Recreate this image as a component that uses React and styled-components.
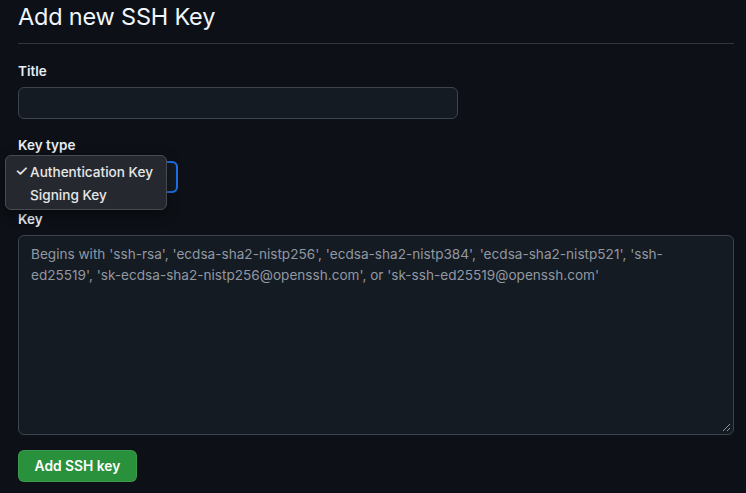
import React from "react";
import styled, { createGlobalStyle } from "styled-components";

const Global = createGlobalStyle`
  html, body { margin: 0; padding: 0; background: #0d1117; }
  body { font-family: Inter, "Noto Sans", sans-serif; color: #e6edf3; }
  * { box-sizing: border-box; }
`;

const Page = styled.div`
  width: 746px;
  height: 493px;
  background: #0d1117;
  padding: 0 12px 0 18px;
  overflow: hidden;
`;

const Header = styled.div`
  border-bottom: 1px solid #30363d;
  height: 44px;
  display: flex;
  align-items: flex-start;
`;

const Heading = styled.h2`
  margin: 0;
  padding-top: 2px;
  font-size: 23.5px;
  font-weight: 400;
  letter-spacing: -0.2px;
  line-height: 30px;
  color: #f0f6fc;
`;

const Form = styled.div`
  display: flex;
  flex-direction: column;
  padding-top: 17px;
`;

const Field = styled.div`
  display: flex;
  flex-direction: column;
  margin-bottom: ${(p) => p.$mb || 16}px;
`;

const Label = styled.label`
  font-size: 13.5px;
  font-weight: 600;
  line-height: 20px;
  margin-bottom: 6px;
  color: #e6edf3;
`;

const Input = styled.div`
  width: 440px;
  height: 32px;
  background: #151b23;
  border: 1px solid #3d444d;
  border-radius: 6px;
`;

const SelectWrap = styled.div`
  position: relative;
  height: 32px;
`;

const Select = styled.div`
  width: 160px;
  height: 32px;
  background: #151b23;
  border: 2px solid #1f6feb;
  border-radius: 6px;
`;

const Menu = styled.div`
  position: absolute;
  left: -13px;
  top: -6px;
  width: 162px;
  padding: 4px 0 3px;
  background: #25292f;
  border: 1px solid #474c53;
  border-radius: 6px;
  box-shadow: 0 4px 12px rgba(0, 0, 0, 0.5);
  display: flex;
  flex-direction: column;
`;

const MenuItem = styled.div`
  display: flex;
  align-items: center;
  height: 23px;
  font-size: 13.6px;
  font-weight: 500;
  color: #e6e7e8;
  padding-left: 24px;
  position: relative;
`;

const Check = styled.span`
  position: absolute;
  left: 9px;
  top: 2px;
  font-size: 15px;
  line-height: 18px;
`;

const TextArea = styled.div`
  width: 716px;
  height: 200px;
  background: #151b23;
  border: 1px solid #3d444d;
  border-radius: 6px;
  padding: 8px 12px;
  font-size: 13.6px;
  line-height: 21px;
  color: #9198a1;
  position: relative;
`;

const Grip = styled.svg`
  position: absolute;
  right: 2px;
  bottom: 2px;
`;

const Button = styled.button`
  align-self: flex-start;
  height: 32px;
  width: 119px;
  background: #29903b;
  border: 1px solid rgba(240, 246, 252, 0.1);
  border-radius: 6px;
  color: #ffffff;
  font-family: Inter, sans-serif;
  font-size: 13.8px;
  font-weight: 600;
  padding: 0;
`;

export default function App() {
  return (
    <>
      <Global />
      <Page>
        <Header>
          <Heading>Add new SSH Key</Heading>
        </Header>
        <Form>
          <Field>
            <Label>Title</Label>
            <Input />
          </Field>
          <Field>
            <Label>Key type</Label>
            <SelectWrap>
              <Select />
              <Menu>
                <MenuItem>
                  <Check>✓</Check>Authentication Key
                </MenuItem>
                <MenuItem>Signing Key</MenuItem>
              </Menu>
            </SelectWrap>
          </Field>
          <Field $mb={15}>
            <Label>Key</Label>
            <TextArea>
              Begins with 'ssh-rsa', 'ecdsa-sha2-nistp256', 'ecdsa-sha2-nistp384', 'ecdsa-sha2-nistp521', 'ssh-ed25519', 'sk-ecdsa-sha2-nistp256@openssh.com', or 'sk-ssh-ed25519@openssh.com'
              <Grip width="9" height="9" viewBox="0 0 9 9">
                <path d="M8 1L1 8M8 5L5 8" stroke="#8b949e" strokeWidth="1" />
              </Grip>
            </TextArea>
          </Field>
          <Button>Add SSH key</Button>
        </Form>
      </Page>
    </>
  );
}
